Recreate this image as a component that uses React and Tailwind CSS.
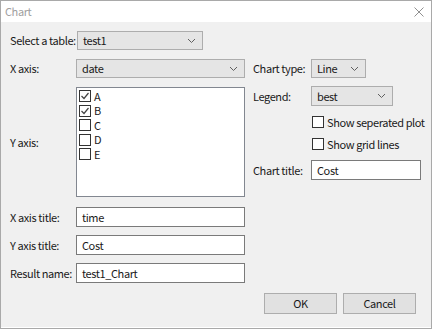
import React from 'react';

const font = { fontFamily: '"Noto Sans CJK KR", "Noto Sans", sans-serif' };

const Chevron = () => (
  <svg width="9" height="6" viewBox="0 0 9 6" className="shrink-0">
    <path d="M1 1 L4.5 4.5 L8 1" fill="none" stroke="#606060" strokeWidth="1" />
  </svg>
);

const Combo = ({ value, className }) => (
  <div className={`flex items-center justify-between shrink-0 bg-[#e5e5e5] border border-[#adadad] pl-[5px] pr-[6px] ${className}`}>
    <span>{value}</span>
    <Chevron />
  </div>
);

const Input = ({ value, className }) => (
  <div className={`flex items-center shrink-0 bg-white border border-[#7a7a7a] px-[5px] ${className}`}>
    {value}
  </div>
);

const Label = ({ children, className }) => (
  <span className={`whitespace-nowrap shrink-0 ${className}`}>{children}</span>
);

const Check = ({ checked, label, className = '' }) => (
  <div className={`flex items-center gap-[3px] h-[12px] ${className}`}>
    <div className="w-[12px] h-[12px] shrink-0 border border-[#333333] bg-white flex items-center justify-center">
      {checked && (
        <svg width="10" height="10" viewBox="0 0 10 10">
          <path d="M1.5 5 L4 7.5 L8.5 2" fill="none" stroke="#444" strokeWidth="1.2" />
        </svg>
      )}
    </div>
    <span className="whitespace-nowrap">{label}</span>
  </div>
);

export default function App() {
  return (
    <div className="w-[432px] h-[329px] bg-white text-[11px] tracking-[-0.4px] text-[#1a1a1a] leading-none" style={font}>
      <div className="w-full h-full border border-[#a9a9a9] flex flex-col">
        {/* title bar */}
        <div className="h-[21px] bg-white flex items-center justify-between pl-[4px] pr-[7px] shrink-0">
          <span className="text-[#a0a0a0]">Chart</span>
          <svg width="10" height="10" viewBox="0 0 10 10">
            <path d="M0.5 0.5 L9.5 9.5 M9.5 0.5 L0.5 9.5" stroke="#909090" strokeWidth="1" />
          </svg>
        </div>

        <div className="flex-1 bg-[#f0f0f0] border-b border-white pl-[9px] pt-[9px] flex flex-col">
          {/* select a table */}
          <div className="flex items-center h-[19px]">
            <Label className="w-[67px]">Select a table:</Label>
            <Combo value="test1" className="w-[126px] h-[19px]" />
          </div>

          <div className="flex mt-[9px]">
            {/* left column */}
            <div className="w-[235px] shrink-0 flex flex-col">
              <div className="flex items-center h-[19px]">
                <Label className="w-[66px]">X axis:</Label>
                <Combo value="date" className="w-[169px] h-[19px]" />
              </div>
              <div className="flex items-center mt-[9px]">
                <Label className="w-[66px]">Y axis:</Label>
                <div className="w-[169px] h-[110px] shrink-0 bg-white border border-[#828790] pl-[2px] pt-[2px] flex flex-col gap-[2.5px]">
                  <Check checked label="A" />
                  <Check checked label="B" />
                  <Check label="C" />
                  <Check label="D" />
                  <Check label="E" />
                </div>
              </div>
              <div className="flex items-center mt-[10px]">
                <Label className="w-[66px]">X axis title:</Label>
                <Input value="time" className="w-[169px] h-[20px]" />
              </div>
              <div className="flex items-center mt-[8px]">
                <Label className="w-[66px]">Y axis title:</Label>
                <Input value="Cost" className="w-[169px] h-[20px]" />
              </div>
              <div className="flex items-center mt-[8px]">
                <Label className="w-[66px]">Result name:</Label>
                <Input value="test1_Chart" className="w-[169px] h-[20px]" />
              </div>
            </div>

            {/* right column */}
            <div className="ml-[8px] flex flex-col">
              <div className="flex items-center h-[19px]">
                <Label className="w-[58px]">Chart type:</Label>
                <Combo value="Line" className="w-[55px] h-[19px]" />
              </div>
              <div className="flex items-center mt-[8px]">
                <Label className="w-[58px]">Legend:</Label>
                <Combo value="best" className="w-[82px] h-[20px]" />
              </div>
              <Check label="Show seperated plot" className="ml-[59px] mt-[10px]" />
              <Check label="Show grid lines" className="ml-[59px] mt-[10px]" />
              <div className="flex items-center mt-[10px]">
                <Label className="w-[58px]">Chart title:</Label>
                <Input value="Cost" className="w-[110px] h-[20px]" />
              </div>
            </div>
          </div>

          {/* buttons */}
          <div className="flex justify-end gap-[6px] pr-[15px] mt-[10px]">
            <button className="w-[73px] h-[21px] bg-[#e1e1e1] border border-[#adadad]">OK</button>
            <button className="w-[73px] h-[21px] bg-[#e1e1e1] border border-[#adadad]">Cancel</button>
          </div>
        </div>
      </div>
    </div>
  );
}
